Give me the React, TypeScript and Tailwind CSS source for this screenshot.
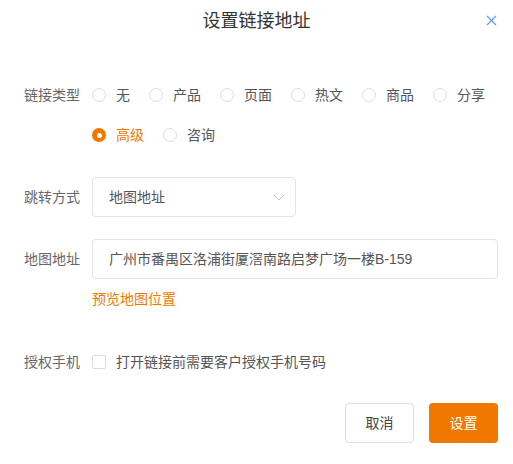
import { useState } from "react";

const LINK_TYPES = ["无", "产品", "页面", "热文", "商品", "分享", "高级", "咨询"];

function Radio({ label, checked, onClick }: { label: string; checked: boolean; onClick: () => void }) {
  return (
    <button onClick={onClick} className="flex items-center h-5 gap-[10px]">
      {checked ? (
        <span className="w-[14px] h-[14px] rounded-full bg-[#f07800] flex items-center justify-center">
          <span className="w-[5px] h-[5px] rounded-full bg-white" />
        </span>
      ) : (
        <span className="w-[14px] h-[14px] rounded-full border border-[#dcdce4] bg-white" />
      )}
      <span className={`text-[14px] leading-5 ${checked ? "text-[#f07800]" : "text-[#555]"}`}>{label}</span>
    </button>
  );
}

export default function App() {
  const [type, setType] = useState("高级");
  const [auth, setAuth] = useState(false);

  return (
    <div
      className="relative w-[513px] h-[464px] bg-white overflow-hidden"
      style={{ fontFamily: '"Liberation Sans", "Noto Sans CJK SC", sans-serif' }}
    >
      {/* Header */}
      <div className="h-[42px] flex items-center justify-center text-[18px] text-[#333]">设置链接地址</div>
      <button className="absolute left-[485px] top-[14px] w-3 h-3 flex items-center justify-center">
        <svg width="11" height="11" viewBox="0 0 11 11" fill="none">
          <path d="M1 1L10 10M10 1L1 10" stroke="#5b9bef" strokeWidth="1.2" />
        </svg>
      </button>

      <div className="pl-6 pr-[15px]">
        {/* Link type */}
        <div className="flex mt-[43px]">
          <div className="w-[68px] shrink-0 text-[14px] leading-5 text-[#666]">链接类型</div>
          <div className="flex flex-wrap gap-x-[19px] gap-y-5 w-[406px]">
            {LINK_TYPES.map((t) => (
              <Radio key={t} label={t} checked={type === t} onClick={() => setType(t)} />
            ))}
          </div>
        </div>

        {/* Jump method */}
        <div className="flex items-center mt-[32px]">
          <div className="w-[68px] shrink-0 text-[14px] text-[#666]">跳转方式</div>
          <div className="w-[204px] h-10 border border-[#e3e3e8] rounded flex items-center justify-between pl-4 pr-[10px]">
            <span className="text-[14px] text-[#555]">地图地址</span>
            <svg width="12" height="7" viewBox="0 0 12 7" fill="none">
              <path d="M1 1L6 6L11 1" stroke="#c4c4cc" strokeWidth="1" />
            </svg>
          </div>
        </div>

        {/* Map address */}
        <div className="flex items-center mt-[22px]">
          <div className="w-[68px] shrink-0 text-[14px] text-[#666]">地图地址</div>
          <div className="w-[407px] h-10 border border-[#e3e3e8] rounded flex items-center pl-4">
            <span className="text-[14px] text-[#555]">广州市番禺区洛浦街厦滘南路启梦广场一楼B-159</span>
          </div>
        </div>
        <div className="ml-[68px] mt-[10px] text-[14px] leading-5 text-[#f07800]">预览地图位置</div>

        {/* Auth phone */}
        <div className="flex items-center mt-[43px] h-5">
          <div className="w-[68px] shrink-0 text-[14px] text-[#666]">授权手机</div>
          <button onClick={() => setAuth(!auth)} className="flex items-center gap-[10px]">
            <span
              className={`w-[14px] h-[14px] rounded-[2px] border ${auth ? "border-[#f07800] bg-[#f07800]" : "border-[#dcdce4] bg-white"}`}
            />
            <span className="text-[14px] text-[#555]">打开链接前需要客户授权手机号码</span>
          </button>
        </div>

        {/* Footer */}
        <div className="flex justify-end gap-[15px] mt-[31px]">
          <button className="w-[69px] h-10 rounded border border-[#dcdce4] bg-white text-[14px] text-[#444]">取消</button>
          <button className="w-[69px] h-10 rounded bg-[#f07800] text-[14px] text-white">设置</button>
        </div>
      </div>
    </div>
  );
}
